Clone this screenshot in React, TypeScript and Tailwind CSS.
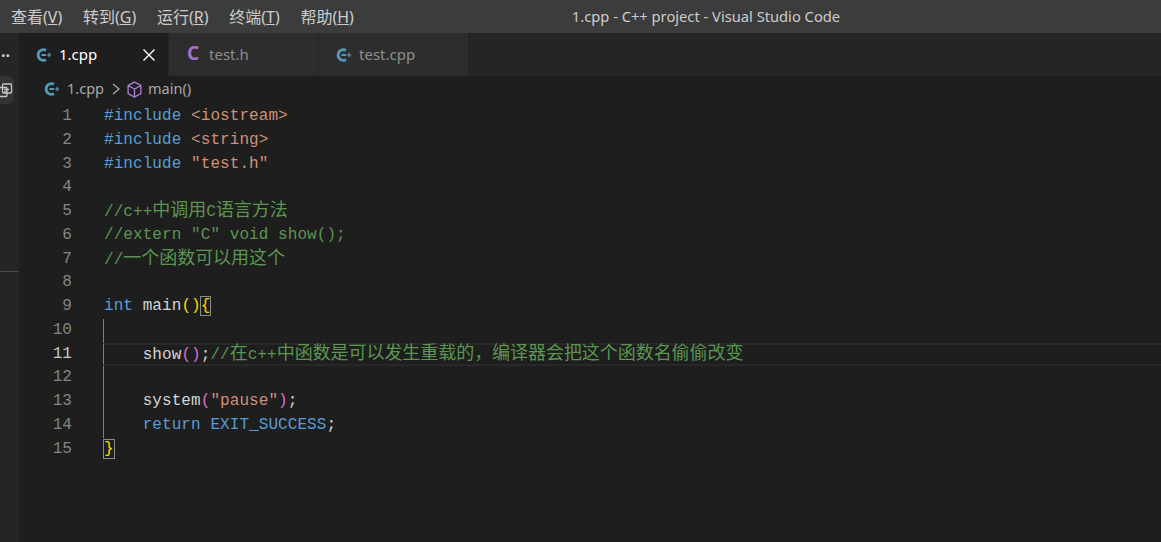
import type { ReactNode } from "react";

const MONO = "font-['Liberation_Mono','Noto_Sans_CJK_SC',monospace]";
const UI = "font-['Noto_Sans','Noto_Sans_CJK_SC',sans-serif]";

function CppIcon({ className }: { className?: string }) {
  return (
    <svg viewBox="0 0 16 16" width="16" height="16" className={className} fill="none">
      <path d="M10 3.2A5.4 5.4 0 1 0 10 12.8" stroke="#519aba" strokeWidth="2.8" />
      <path d="M5.5 8h4.5" stroke="#519aba" strokeWidth="2" />
      <path d="M10.8 8h4.6M13.1 5.8v4.4" stroke="#519aba" strokeWidth="1.2" />
    </svg>
  );
}

function Tab({ name, icon, active }: { name: string; icon: ReactNode; active?: boolean }) {
  return (
    <div
      className={`flex h-full w-[150px] shrink-0 items-center border-r border-[#252526] pl-[17px] ${
        active ? "bg-[#1e1e1e] text-white" : "bg-[#2d2d2d] text-[#8d8d8d]"
      }`}
    >
      <span className="flex w-[23px] shrink-0">{icon}</span>
      <span className="text-[15px]">{name}</span>
      {active && (
        <svg viewBox="0 0 14 14" width="14" height="14" className="ml-auto mr-[12px]" stroke="#fff" strokeWidth="1.4">
          <path d="M1.5 1.5l11 11M12.5 1.5l-11 11" />
        </svg>
      )}
    </div>
  );
}

const kw = "text-[#569cd6]";
const str = "text-[#ce9178]";
const cm = "text-[#5a9650]";
const y = "text-[#ffd700]";
const p = "text-[#da70d6]";

function Cn({ children }: { children: string }) {
  return <span className="text-[18px] tracking-[-0.05px]">{children}</span>;
}

const lines: ReactNode[] = [
  <><span className={kw}>#include</span> <span className={str}>&lt;iostream&gt;</span></>,
  <><span className={kw}>#include</span> <span className={str}>&lt;string&gt;</span></>,
  <><span className={kw}>#include</span> <span className={str}>"test.h"</span></>,
  "",
  <span className={cm}>//c++<Cn>中调用</Cn>C<Cn>语言方法</Cn></span>,
  <span className={cm}>//extern "C" void show();</span>,
  <span className={cm}>//<Cn>一个函数可以用这个</Cn></span>,
  "",
  <><span className={kw}>int</span> main<span className={y}>()</span><span className={`${y} outline outline-[#8a8a8a]`}>{"{"}</span></>,
  "",
  <>{"    "}show<span className={p}>()</span>;<span className={cm}>//<Cn>在</Cn>c++<Cn>中函数是可以发生重载的，编译器会把这个函数名偷偷改变</Cn></span></>,
  "",
  <>{"    "}system<span className={p}>(</span><span className={str}>"pause"</span><span className={p}>)</span>;</>,
  <>{"    "}<span className={kw}>return EXIT_SUCCESS</span>;</>,
  <span className={`${y} outline outline-[#8a8a8a]`}>{"}"}</span>,
];

export default function App() {
  return (
    <div className={`flex h-[542px] w-[1161px] flex-col overflow-hidden bg-[#1e1e1e] ${UI}`}>
      {/* title bar */}
      <div className="flex h-[33px] shrink-0 items-center bg-[#3c3c3c] pl-[11px] text-[#cccccc]">
        <div className="flex gap-[20.7px] text-[16px]">
          <span>查看(<u>V</u>)</span>
          <span>转到(<u>G</u>)</span>
          <span>运行(<u>R</u>)</span>
          <span>终端(<u>T</u>)</span>
          <span>帮助(<u>H</u>)</span>
        </div>
        <span className="ml-[218px] text-[14.7px]">1.cpp - C++ project - Visual Studio Code</span>
      </div>

      <div className="flex min-h-0 flex-1">
        {/* side strip */}
        <div className="flex w-[19px] shrink-0 flex-col bg-[#252526]">
          <div className="flex h-[43px] items-center pl-[1px] text-[16px] font-bold leading-none text-[#cccccc]">··</div>
          <div className="flex h-[28px] w-[14px] items-center justify-end overflow-hidden rounded-r-md bg-[#333333] pr-[1px]">
            <svg viewBox="0 0 16 16" width="16" height="16" className="shrink-0" fill="none" stroke="#c5c5c5" strokeWidth="1.3">
              <rect x="5.5" y="2" width="9" height="9" rx="1" />
              <rect x="1" y="5.5" width="9" height="9" rx="1" />
              <path d="M7 7.5h5M7 10h3" />
            </svg>
          </div>
          <div className="mt-[167px] h-px bg-[#4a4a4a]" />
        </div>

        <div className="flex min-w-0 flex-1 flex-col">
          {/* tabs */}
          <div className="flex h-[43px] shrink-0 bg-[#252526]">
            <Tab name="1.cpp" active icon={<CppIcon />} />
            <Tab name="test.h" icon={<span className="-mt-[3px] pl-[1px] text-[19px] font-bold leading-none text-[#a074c4]">C</span>} />
            <Tab name="test.cpp" icon={<CppIcon />} />
          </div>

          {/* breadcrumb */}
          <div className="flex h-[26px] shrink-0 items-center pl-[25px] text-[14.5px] text-[#a9a9a9]">
            <CppIcon />
            <span className="ml-[7px]">1.cpp</span>
            <svg viewBox="0 0 10 14" width="10" height="14" className="ml-[7px]" fill="none" stroke="#a9a9a9" strokeWidth="1.3">
              <path d="M2 2l6 5-6 5" />
            </svg>
            <svg viewBox="0 0 16 16" width="17" height="17" className="ml-[5px]" fill="none" stroke="#b180d7" strokeWidth="1.2">
              <path d="M8 1l6 3.2v7.6L8 15l-6-3.2V4.2zM2 4.2L8 7.6l6-3.4M8 7.6V15" />
            </svg>
            <span className="ml-[5px]">main()</span>
          </div>

          {/* code */}
          <div className={`${MONO} mt-[3px] text-[16px] tracking-[0.07px] text-[#d4d4d4]`}>
            {lines.map((line, i) => {
              const n = i + 1;
              const guide = n >= 10 && n <= 14;
              const current = n === 11;
              return (
                <div key={n} className="flex h-[23.75px] leading-[23.75px]">
                  <span className={`w-[53px] shrink-0 text-right ${current ? "text-[#c6c6c6]" : "text-[#858585]"}`}>{n}</span>
                  <span className="w-[31px] shrink-0" />
                  <span
                    className={`min-w-0 flex-1 whitespace-pre border-l ${guide ? "border-l-[#808080]" : "border-l-transparent"} ${
                      current ? "border-y-2 border-y-[#282828] leading-[19.75px]" : ""
                    }`}
                  >
                    {line}
                  </span>
                </div>
              );
            })}
          </div>
        </div>
      </div>
    </div>
  );
}
